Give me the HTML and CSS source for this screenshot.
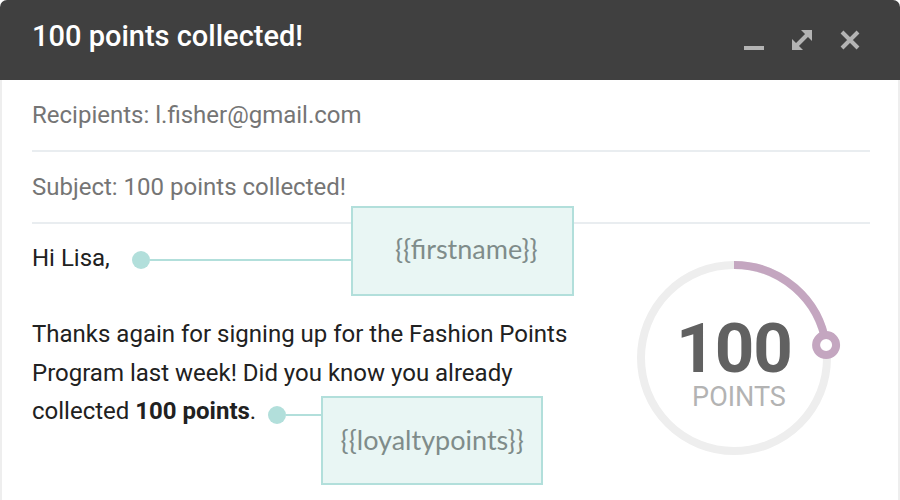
FILE: index.html
```html
<!DOCTYPE html>
<html lang="en">
<head>
<meta charset="utf-8">
<title>100 points collected!</title>
<link rel="stylesheet" href="styles.css">
</head>
<body>
<div class="window">
  <header class="titlebar">
    <h1 class="title">100 points collected!</h1>
    <div class="controls">
      <svg class="ctl" width="20" height="20" viewBox="0 0 20 20"><rect x="0" y="16" width="20" height="4" fill="currentColor"/></svg>
      <svg class="ctl" width="20" height="20" viewBox="0 0 20 20"><line x1="3.5" y1="16.5" x2="16.5" y2="3.5" stroke="currentColor" stroke-width="4"/><polygon points="9,0 20,0 20,11" fill="currentColor"/><polygon points="0,9 0,20 11,20" fill="currentColor"/></svg>
      <svg class="ctl" width="20" height="20" viewBox="0 0 20 20"><path d="M2 2 L18 18 M18 2 L2 18" stroke="currentColor" stroke-width="4"/></svg>
    </div>
  </header>
  <main class="mail">
    <div class="field">Recipients: l.fisher@gmail.com</div>
    <div class="field">Subject: 100 points collected!</div>
    <div class="message">
      <div class="text">
        <p class="greeting">Hi Lisa,<span class="callout callout-name"><span class="leader"></span><span class="tag">{{firstname}}</span></span></p>
        <p class="para">Thanks again for signing up for the Fashion Points Program last week! Did you know you already collected <strong>100 points</strong>.<span class="callout callout-points"><span class="leader"></span><span class="tag">{{loyaltypoints}}</span></span></p>
      </div>
      <div class="meter">
        <svg class="ring" width="200" height="200" viewBox="0 0 200 200">
          <circle cx="100" cy="100" r="93" fill="none" stroke="#eeeeee" stroke-width="8"/>
          <path d="M100 7 A93 93 0 0 1 192.1 87.1" fill="none" stroke="#c4a6c0" stroke-width="8"/>
          <circle cx="192.1" cy="87.1" r="10" fill="#ffffff" stroke="#c4a6c0" stroke-width="8"/>
        </svg>
        <div class="score">
          <span class="score-num">100</span>
          <span class="score-label">POINTS</span>
        </div>
      </div>
    </div>
  </main>
</div>
</body>
</html>
```
FILE: styles.css
```css
html, body {
  margin: 0;
  padding: 0;
  background: #ffffff;
}
body {
  font-family: Roboto, "Liberation Sans", sans-serif;
  width: 900px;
  height: 500px;
  overflow: hidden;
}
.window {
  display: flex;
  flex-direction: column;
  height: 100%;
}
.titlebar {
  height: 80px;
  flex: none;
  background: #404040;
  border-radius: 7px 7px 0 0;
  display: flex;
  align-items: center;
  justify-content: space-between;
  padding: 0 40px 0 32px;
}
.title {
  margin: 0 0 8px 0;
  font-size: 29px;
  font-weight: 500;
  line-height: 32px;
  color: #ffffff;
}
.controls {
  display: flex;
  gap: 28px;
  color: #b4b4b4;
}
.ctl {
  display: block;
}
.mail {
  flex: 1;
  border-left: 2px solid #eeeeee;
  border-right: 2px solid #eeeeee;
}
.field {
  height: 70px;
  margin: 0 28px 0 30px;
  border-bottom: 2px solid #e9edf0;
  display: flex;
  align-items: center;
  font-size: 24px;
  color: #757575;
}
.message {
  display: flex;
  justify-content: space-between;
  padding: 0 64px 0 30px;
}
.text {
  width: 560px;
  color: #212121;
  font-size: 24px;
}
.greeting {
  margin: 15px 0 0 0;
  line-height: 38px;
}
.para {
  margin: 38px 0 0 0;
  line-height: 38.5px;
}
.para strong {
  font-weight: 700;
}
.callout {
  position: relative;
  display: inline-block;
  width: 18px;
  height: 18px;
  border-radius: 50%;
  background: #b2dfdb;
}
.callout-name {
  margin-left: 22px;
  vertical-align: -3px;
}
.callout-points {
  margin-left: 12px;
  vertical-align: -5px;
}
.leader {
  position: absolute;
  left: 18px;
  top: 8px;
  height: 2px;
  background: #b2dfdb;
}
.tag {
  position: absolute;
  box-sizing: border-box;
  display: flex;
  align-items: center;
  justify-content: center;
  border: 2px solid #b2dfdb;
  background: #e9f6f4;
  font-family: Lato, "Open Sans", sans-serif;
  font-size: 27px;
  color: #7f8c8a;
  white-space: nowrap;
}
.callout-name .leader {
  width: 201px;
}
.callout-name .tag {
  left: 219px;
  top: -45px;
  width: 223px;
  height: 90px;
  padding: 0 0 4px 8px;
}
.callout-points .leader {
  width: 35px;
}
.callout-points .tag {
  left: 53px;
  top: -10px;
  width: 222px;
  height: 89px;
}
.meter {
  position: relative;
  width: 200px;
  height: 200px;
  margin-top: 34px;
}
.ring {
  display: block;
  overflow: visible;
}
.score {
  position: absolute;
  inset: 0;
  display: flex;
  flex-direction: column;
  align-items: center;
  padding-top: 60px;
}
.score-num {
  font-size: 69px;
  font-weight: 700;
  line-height: 62px;
  letter-spacing: -1px;
  color: #616161;
}
.score-label {
  margin: 2px 0 0 10px;
  font-size: 27px;
  line-height: 30px;
  color: #b3b3b3;
}
```
